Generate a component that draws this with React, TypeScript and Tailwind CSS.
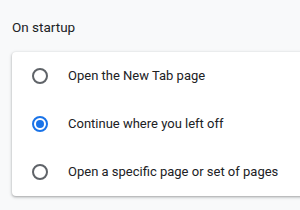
const options = [
  { label: "Open the New Tab page", checked: false },
  { label: "Continue where you left off", checked: true },
  { label: "Open a specific page or set of pages", checked: false },
];

function Radio({ checked }: { checked: boolean }) {
  return (
    <span
      className={`flex h-4 w-4 shrink-0 items-center justify-center rounded-full border-2 ${
        checked ? "border-[#1a73e8]" : "border-[#5f6368]"
      }`}
    >
      {checked && <span className="h-2 w-2 rounded-full bg-[#1a73e8]" />}
    </span>
  );
}

export default function App() {
  return (
    <div className="h-[210px] w-[300px] overflow-hidden bg-[#f8f9fa] font-['Roboto',sans-serif] text-[#202124]">
      <div className="px-3 pt-[17px]">
        <h2 className="text-[13.5px] leading-5 font-normal">On startup</h2>
        <div className="mt-[15px] w-[320px] rounded bg-white shadow-[0_1px_2px_0_rgba(60,64,67,0.3),0_1px_3px_1px_rgba(60,64,67,0.15)]">
          {options.map((o) => (
            <div key={o.label} className="flex h-12 items-center gap-5 pl-5">
              <Radio checked={o.checked} />
              <span className="text-[13px] text-[#202124]">{o.label}</span>
            </div>
          ))}
        </div>
      </div>
    </div>
  );
}
